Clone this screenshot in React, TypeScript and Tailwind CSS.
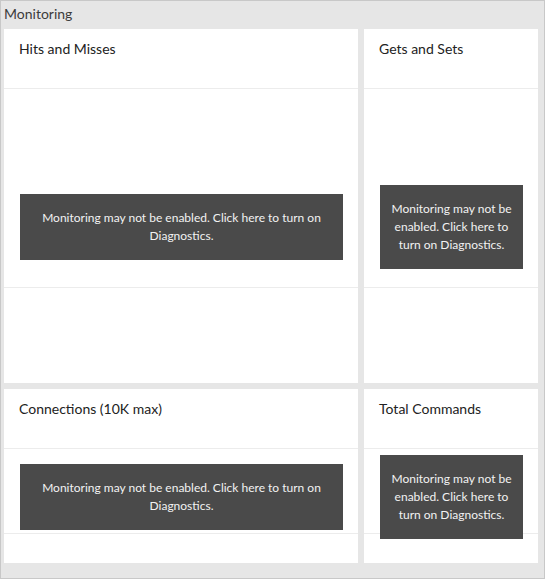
const font = { fontFamily: 'Lato, "Open Sans", sans-serif' };

type TileProps = {
  title: string;
  tall?: boolean;
};

function Notice() {
  return (
    <div className="bg-[#4a4a4a] px-[10px] py-[15px] text-center text-[12px] leading-[18px] text-[#f2f2f2]">
      Monitoring may not be enabled. Click here to turn on Diagnostics.
    </div>
  );
}

function Tile({ title, tall }: TileProps) {
  return (
    <div className="flex flex-col bg-white">
      <div className="h-[60px] shrink-0 border-b border-[#ececec] pl-[15px] pt-[9px] text-[14px] text-[#222]">
        {title}
      </div>
      <div className="relative flex-1">
        <div className={tall ? "h-[199px] border-b border-[#ececec]" : "h-[85px] border-b border-[#ececec]"} />
        <div className="absolute inset-x-0 top-0 bottom-[18px] flex items-center pl-[16px] pr-[15px]">
          <div className="w-full">
            <Notice />
          </div>
        </div>
      </div>
    </div>
  );
}

export default function App() {
  return (
    <div
      style={font}
      className="flex h-[579px] w-[545px] flex-col border border-[#c8c8c8] bg-[#e6e6e6]"
    >
      <div className="h-[28px] px-[3px] pt-[4px] text-[14px] leading-[18px] text-[#3c3c3c]">
        Monitoring
      </div>
      <div className="grid grid-cols-[354px_174px] grid-rows-[354px_174px] gap-[6px] pl-[3px]">
        <Tile title="Hits and Misses" tall />
        <Tile title="Gets and Sets" tall />
        <Tile title="Connections (10K max)" />
        <Tile title="Total Commands" />
      </div>
    </div>
  );
}
